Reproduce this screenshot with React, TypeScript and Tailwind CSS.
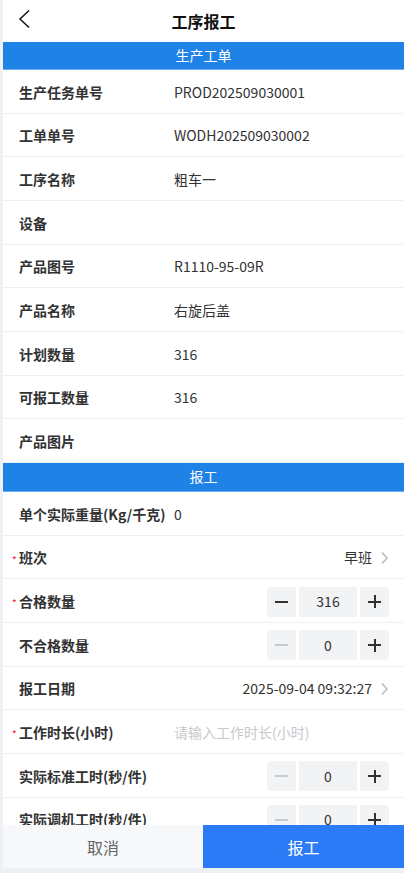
import React from 'react';

const font = { fontFamily: '"Noto Sans CJK SC", "Noto Sans", sans-serif' };

type InfoRow = { label: string; value?: string };

const orderRows: InfoRow[] = [
  { label: '生产任务单号', value: 'PROD202509030001' },
  { label: '工单单号', value: 'WODH202509030002' },
  { label: '工序名称', value: '粗车一' },
  { label: '设备' },
  { label: '产品图号', value: 'R1110-95-09R' },
  { label: '产品名称', value: '右旋后盖' },
  { label: '计划数量', value: '316' },
  { label: '可报工数量', value: '316' },
  { label: '产品图片' },
];

function SectionBar({ title }: { title: string }) {
  return (
    <div className="h-[29px] flex items-center justify-center bg-[#1f82e6] border-b border-[#6eaef0] text-white text-[14px]">
      {title}
    </div>
  );
}

function Row({ label, required, children }: { label: string; required?: boolean; children?: React.ReactNode }) {
  return (
    <div className="relative h-[43.67px] flex items-center pt-[2px] pl-[16px] pr-[15px] border-b border-[#eef0f3] bg-white">
      {required && <span className="absolute left-[9px] top-[19px] text-[#ee0a24] text-[10px] leading-none">*</span>}
      <div className="w-[155px] shrink-0 text-[14px] font-bold text-[#323233] whitespace-nowrap">{label}</div>
      <div className="flex-1 min-w-0 flex items-center text-[14px] text-[#323233]">{children}</div>
    </div>
  );
}

function Chevron() {
  return (
    <svg className="w-[9px] h-[14px] ml-[8px]" viewBox="0 0 9 14" fill="none" stroke="#b8babe" strokeWidth={1.5}>
      <path d="M2 1.5l5 5.5-5 5.5" />
    </svg>
  );
}

function Stepper({ value }: { value: number }) {
  const minusOff = value <= 0;
  return (
    <div className="ml-auto flex items-center gap-[3px]">
      <button className="w-[29px] h-[30px] rounded-l-[4px] bg-[#f2f3f5] flex items-center justify-center">
        <span className={`block w-[13px] h-[2px] ${minusOff ? 'bg-[#c8c9cc]' : 'bg-[#323233]'}`} />
      </button>
      <div className="w-[58px] h-[30px] bg-[#f2f3f5] flex items-center justify-center text-[14px] text-[#323233]">
        {value}
      </div>
      <button className="relative w-[29px] h-[30px] rounded-r-[4px] bg-[#f2f3f5] flex items-center justify-center">
        <span className="block w-[13px] h-[2px] bg-[#323233]" />
        <span className="absolute block w-[2px] h-[13px] bg-[#323233]" />
      </button>
    </div>
  );
}

export default function App() {
  return (
    <div style={font} className="w-[404px] h-[873px] bg-[#eef0f4] pl-[3px] flex flex-col overflow-hidden">
      <div className="h-[42px] shrink-0 relative flex items-center justify-center bg-white">
        <svg className="absolute left-[13px] top-[9px] w-[16px] h-[20px]" viewBox="0 0 16 20" fill="none" stroke="#111" strokeWidth={1.5}>
          <path d="M13 1.5L4 10l9 8.5" />
        </svg>
        <span className="text-[16px] font-bold text-[#111]">工序报工</span>
      </div>

      <div className="flex-1 overflow-hidden bg-white">
        <div className="-mt-px" />
        <SectionBar title="生产工单" />
        {orderRows.map((r) => (
          <Row key={r.label} label={r.label}>
            {r.value}
          </Row>
        ))}

        <SectionBar title="报工" />
        <Row label="单个实际重量(Kg/千克)">0</Row>
        <Row label="班次" required>
          <div className="ml-auto flex items-center">
            早班
            <Chevron />
          </div>
        </Row>
        <Row label="合格数量" required>
          <Stepper value={316} />
        </Row>
        <Row label="不合格数量">
          <Stepper value={0} />
        </Row>
        <Row label="报工日期">
          <div className="ml-auto flex items-center">
            2025-09-04 09:32:27
            <Chevron />
          </div>
        </Row>
        <Row label="工作时长(小时)" required>
          <span className="text-[#c8c9cc]">请输入工作时长(小时)</span>
        </Row>
        <Row label="实际标准工时(秒/件)">
          <Stepper value={0} />
        </Row>
        <Row label="实际调机工时(秒/件)">
          <Stepper value={0} />
        </Row>
      </div>

      <div className="h-[43px] shrink-0 flex">
        <button className="w-[200px] bg-[#f7f8fa] text-[16px] text-[#646566]">取消</button>
        <button className="flex-1 bg-[#2b7bf7] text-[16px] text-white">报工</button>
      </div>
      <div className="h-[5px] shrink-0" />
    </div>
  );
}
